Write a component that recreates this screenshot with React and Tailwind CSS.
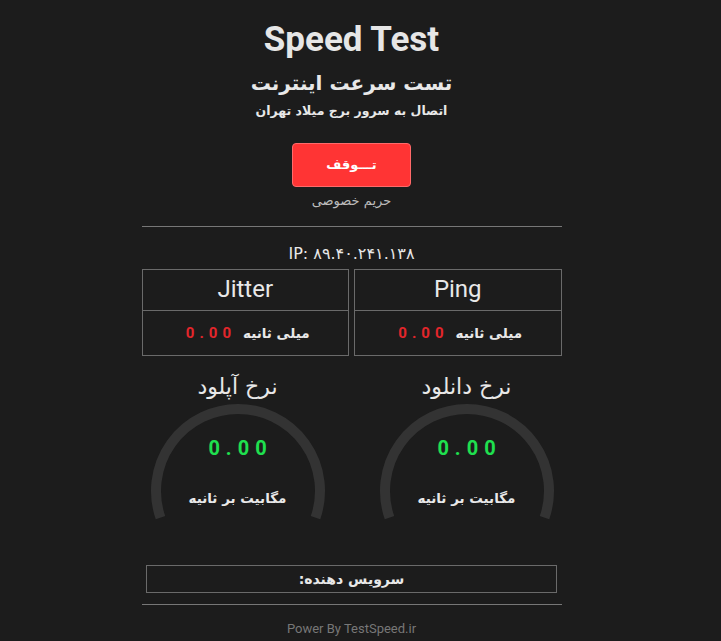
import React from "react";

const faFont = "font-['DejaVu_Sans','Noto_Sans',sans-serif]";
const roboto = "font-['Roboto',sans-serif]";

function Gauge({ title }) {
  return (
    <div className="flex flex-col items-center w-[180px]">
      <div dir="rtl" className={`h-[28px] text-[22px] leading-[28px] text-[#e8e8e8] ${faFont}`}>
        {title}
      </div>
      <div className="relative w-[180px] h-[125px]">
        <svg width="180" height="125" viewBox="0 0 180 125" className="block">
          <path d="M12.5 116.7 A82 82 0 1 1 167.5 116.7" fill="none" stroke="#333333" strokeWidth="10" />
        </svg>
        <div className={`absolute left-0 right-0 top-[32px] pl-[6px] text-center text-[20px] leading-[30px] font-bold tracking-[6px] text-[#1fe04f] ${roboto}`}>
          0.00
        </div>
        <div dir="rtl" className={`absolute left-0 right-0 top-[86px] text-center text-[13.5px] leading-[22px] font-bold text-[#e8e8e8] ${faFont}`}>
          مگابیت بر ثانیه
        </div>
      </div>
    </div>
  );
}

function Stat({ label }) {
  return (
    <div className="flex-1 border border-[#6a6a6a] flex flex-col">
      <div className={`h-[41px] pb-[3px] flex items-center justify-center text-[24px] text-[#e8e8e8] border-b border-[#6a6a6a] ${roboto}`}>
        {label}
      </div>
      <div dir="rtl" className="h-[44px] flex items-center justify-center gap-[7px] text-[#e8e8e8]">
        <span className={`text-[13.5px] font-bold ${faFont}`}>میلی ثانیه</span>
        <span dir="ltr" className={`text-[#e3262b] text-[15px] font-bold tracking-[5px] pl-[5px] ${roboto}`}>0.00</span>
      </div>
    </div>
  );
}

export default function App() {
  return (
    <div className="min-h-[641px] bg-[#1c1c1c] pr-[18px]">
      <div className="mx-auto w-[420px] pt-[20px] flex flex-col items-center text-[#e8e8e8]">
        <div className={`h-[40px] leading-[40px] text-[35px] font-bold text-[#e6e6e6] ${roboto}`}>
          Speed Test
        </div>
        <div dir="rtl" className={`mt-[8px] h-[30px] leading-[30px] text-[20px] font-bold ${faFont}`}>
          تست سرعت اینترنت
        </div>
        <div dir="rtl" className={`mt-[3px] h-[20px] leading-[20px] text-[12.5px] font-bold ${faFont}`}>
          اتصال به سرور برج میلاد تهران
        </div>
        <button dir="rtl" className={`mt-[22px] w-[119px] h-[44px] rounded-[4px] bg-[#ff3434] border border-[#ff6a6a] text-white text-[13px] font-bold flex items-center justify-center ${faFont}`}>
          تـــوقف
        </button>
        <div dir="rtl" className={`mt-[5px] h-[18px] leading-[18px] text-[13px] text-[#bdbdbd] ${faFont}`}>
          حریم خصوصی
        </div>
        <div className="mt-[16px] w-full h-px bg-[#777777]" />
        <div className={`mt-[15px] h-[24px] leading-[24px] text-[16px] text-[#e8e8e8] ${faFont}`}>
          IP: ۸۹.۴۰.۲۴۱.۱۳۸
        </div>
        <div className="mt-[3px] w-full flex gap-[5px]">
          <Stat label="Jitter" />
          <Stat label="Ping" />
        </div>
        <div className="mt-[17px] w-full flex justify-between pl-[6px] pr-[5px]">
          <Gauge title="نرخ آپلود" />
          <Gauge title="نرخ دانلود" />
        </div>
        <div dir="rtl" className={`mt-[39px] w-[411px] h-[28px] border border-[#6a6a6a] flex items-center justify-center text-[14px] font-bold text-[#e8e8e8] ${faFont}`}>
          سرویس دهنده:
        </div>
        <div className="mt-[11px] w-full h-px bg-[#777777]" />
        <div className={`mt-[15px] h-[18px] leading-[18px] text-[13px] text-[#777777] ${roboto}`}>
          Power By TestSpeed.ir
        </div>
      </div>
    </div>
  );
}
